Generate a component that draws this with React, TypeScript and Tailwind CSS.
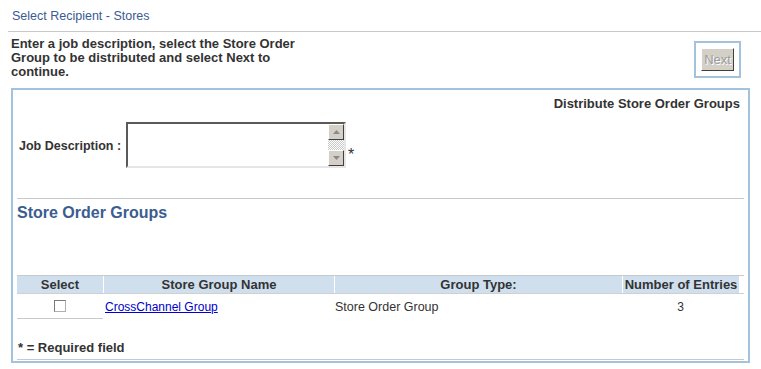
const Arrow = ({ down }: { down?: boolean }) => (
  <div className="w-[16px] h-[16px] bg-[#d4d0c8] border border-t-white border-l-white border-b-[#404040] border-r-[#404040] flex items-center justify-center">
    <svg width="7" height="4" viewBox="0 0 7 4">
      {down ? (
        <polygon points="0,0 7,0 3.5,4" fill="#8a8a8a" />
      ) : (
        <polygon points="0,4 7,4 3.5,0" fill="#8a8a8a" />
      )}
    </svg>
  </div>
);

const headers = [
  { label: "Select", w: "w-[86px]" },
  { label: "Store Group Name", w: "w-[231px]" },
  { label: "Group Type:", w: "w-[288px]" },
  { label: "Number of Entries", w: "w-[117px]" },
];

export default function App() {
  return (
    <div className="w-[761px] h-[369px] bg-white font-['Liberation_Sans',Arial,sans-serif] text-[12px] text-[#333333] overflow-hidden">
      <div className="h-[31px] pl-3 pt-[10px] leading-[13px] text-[12.5px] text-[#3a5b91]">
        Select Recipient - Stores
      </div>
      <div className="ml-2 border-t border-[#c9c9c9]" />

      <div className="flex justify-between h-[56px]">
        <p className="pl-[11px] pt-[5px] font-bold text-[13px] leading-[14px]">
          Enter a job description, select the Store Order
          <br />
          Group to be distributed and select Next to
          <br />
          continue.
        </p>
        <div className="mt-[9px] mr-[20px] w-[47px] h-[37px] border-2 border-[#a3c2de] flex items-center justify-center">
          <div className="w-[33px] h-[23px] bg-[#d4d0c8] border border-t-white border-l-white border-b-[#404040] border-r-[#404040] flex items-center justify-center text-[13px] text-[#9c9c9c] [text-shadow:1px_1px_0_#ffffff] leading-none">
            Next
          </div>
        </div>
      </div>

      <div className="ml-[11px] w-[739px] h-[275px] border-2 border-[#a3c2de] flex flex-col">
        <div className="pt-[7px] pr-[8px] text-right font-bold text-[13px] leading-[13px]">
          Distribute Store Order Groups
        </div>

        <div className="flex items-center mt-[12px] pl-[6px]">
          <span className="w-[107px] pt-[3px] font-bold text-[12.5px]">Job Description :</span>
          <div className="flex items-end">
            <div className="w-[220px] h-[46px] border-2 border-t-[#5a5a5a] border-l-[#5a5a5a] border-b-[#e6e6e6] border-r-[#e6e6e6] bg-white flex justify-end">
              <div className="w-[16px] flex flex-col bg-[repeating-conic-gradient(#c8c8c8_0%_25%,#ffffff_0%_50%)] bg-[length:2px_2px]">
                <Arrow />
                <div className="flex-1" />
                <Arrow down />
              </div>
            </div>
            <span className="ml-[2px] mb-[5px] leading-none text-[16px] text-[#333]">*</span>
          </div>
        </div>

        <div className="mt-[30px] mx-[4px] border-t border-[#c9c9c9]" />
        <h2 className="pl-[4px] pt-[5px] text-[16px] font-bold leading-[18px] text-[#3b5d90]">
          Store Order Groups
        </h2>

        <div className="mt-[53px] mx-[4px]">
          <div className="flex border-t border-[#c9c9c9] h-[19px] border-b border-b-[#d0d0d0]">
            {headers.map((h, i) => (
              <div
                key={h.label}
                className={`${h.w} bg-[#cfdfee] font-bold text-[13px] text-center leading-[17px] ${i > 0 ? "border-l border-white" : ""}`}
              >
                {h.label}
              </div>
            ))}
          </div>
          <div className="flex h-[25px] items-center">
            <div className="w-[86px] h-full flex items-center justify-center border-b border-[#c9c9c9]">
              <div className="w-[12px] h-[12px] border border-t-[#7a7a7a] border-l-[#7a7a7a] border-b-[#b0b0b0] border-r-[#b0b0b0] bg-white" />
            </div>
            <div className="w-[231px] pl-[2px] pt-[1px]">
              <a className="text-[#0000cc] underline">CrossChannel Group</a>
            </div>
            <div className="w-[288px] pl-[1px] pt-[1px] text-[12.5px]">Store Order Group</div>
            <div className="w-[117px] pt-[1px] text-center">3</div>
          </div>
        </div>

        <div className="pl-[5px] pt-[22px] font-bold text-[13px] leading-[13px]">* = Required field</div>
        <div className="mt-[5px] mx-[4px] border-t border-[#c9c9c9]" />
      </div>
    </div>
  );
}
